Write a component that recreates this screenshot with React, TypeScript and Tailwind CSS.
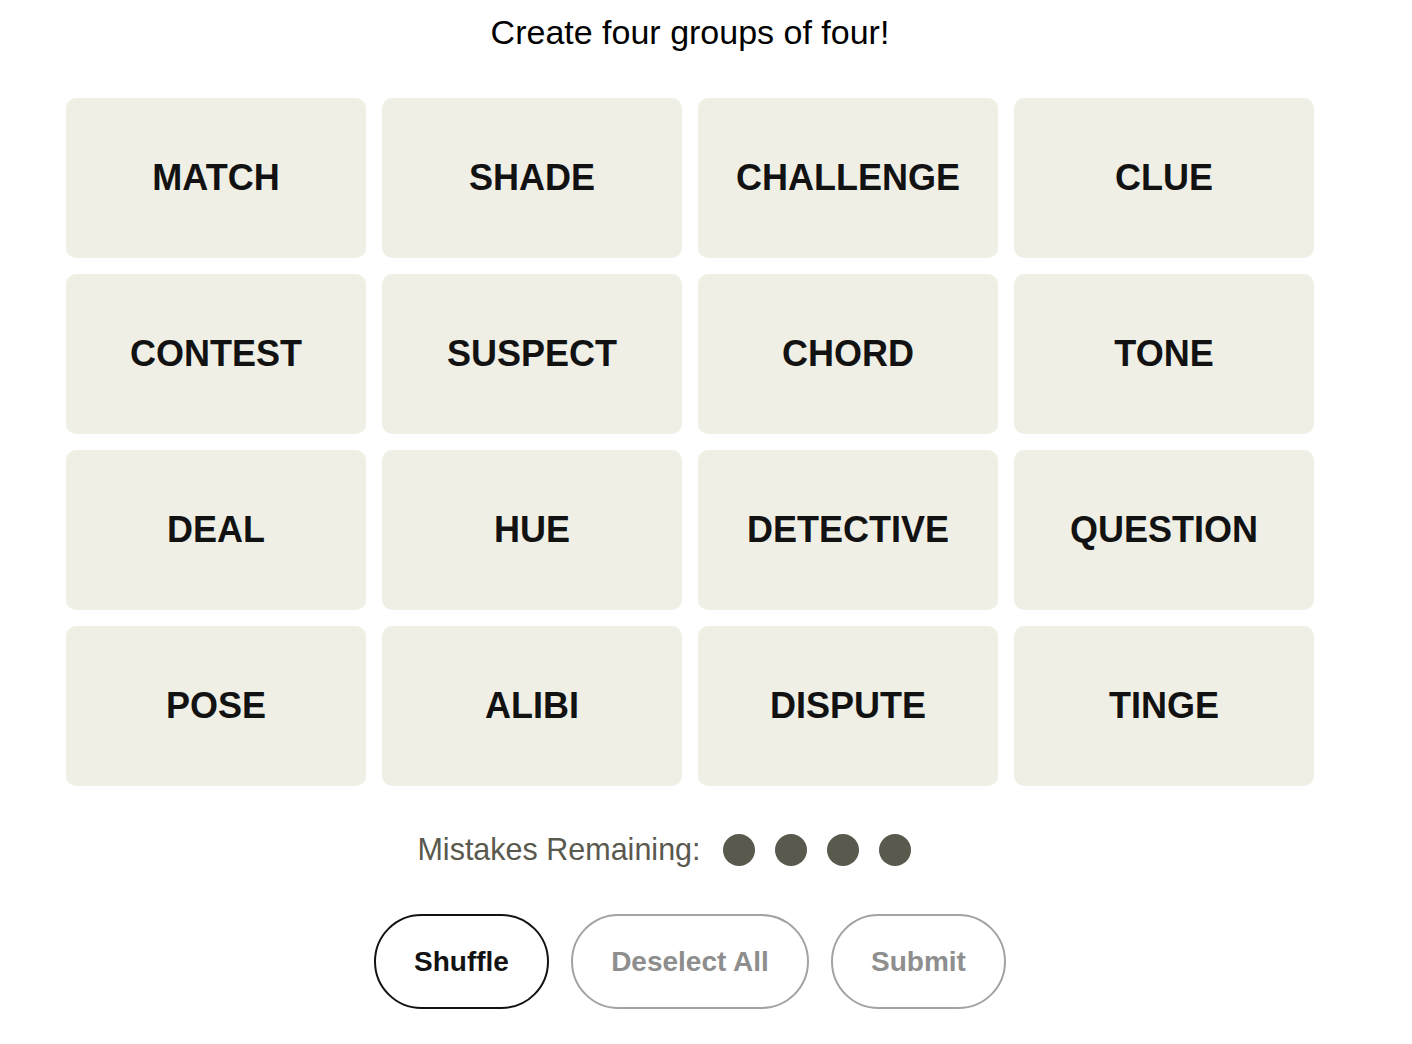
const words = [
  'MATCH', 'SHADE', 'CHALLENGE', 'CLUE',
  'CONTEST', 'SUSPECT', 'CHORD', 'TONE',
  'DEAL', 'HUE', 'DETECTIVE', 'QUESTION',
  'POSE', 'ALIBI', 'DISPUTE', 'TINGE',
];

export default function App() {
  return (
    <div className="min-h-screen bg-white font-['Liberation_Sans',Arial,sans-serif] text-[#121212]">
      <div className="w-[1380px] flex flex-col items-center pt-[12px]">
        <h1 className="text-[34px] leading-[40px] font-normal text-black">Create four groups of four!</h1>

        <div className="mt-[46px] grid grid-cols-4 gap-4">
          {words.map((w) => (
            <button
              key={w}
              className="w-[300px] h-[160px] rounded-[10px] bg-[#efefe6] flex items-center justify-center text-[36px] font-bold text-[#121212]"
            >
              {w}
            </button>
          ))}
        </div>

        <div className="mt-[44px] h-[40px] flex items-center text-[30.5px] text-[#5a594e]">
          <span>Mistakes Remaining:</span>
          <div className="ml-[22px] flex gap-5">
            <span className="w-8 h-8 rounded-full bg-[#5a594e]" />
            <span className="w-8 h-8 rounded-full bg-[#5a594e]" />
            <span className="w-8 h-8 rounded-full bg-[#5a594e]" />
            <span className="w-8 h-8 rounded-full bg-[#5a594e]" />
            <span className="w-8 h-8 rounded-full invisible" />
          </div>
        </div>

        <div className="mt-[44px] flex gap-[22px]">
          <button className="w-[175px] h-[95px] rounded-full border-2 border-[#121212] text-[28px] font-bold text-[#121212]">
            Shuffle
          </button>
          <button className="w-[238px] h-[95px] rounded-full border-2 border-[#a3a3a3] text-[28px] font-bold text-[#8e8e8e]">
            Deselect All
          </button>
          <button className="w-[175px] h-[95px] rounded-full border-2 border-[#a3a3a3] text-[28px] font-bold text-[#8e8e8e]">
            Submit
          </button>
        </div>
      </div>
    </div>
  );
}
